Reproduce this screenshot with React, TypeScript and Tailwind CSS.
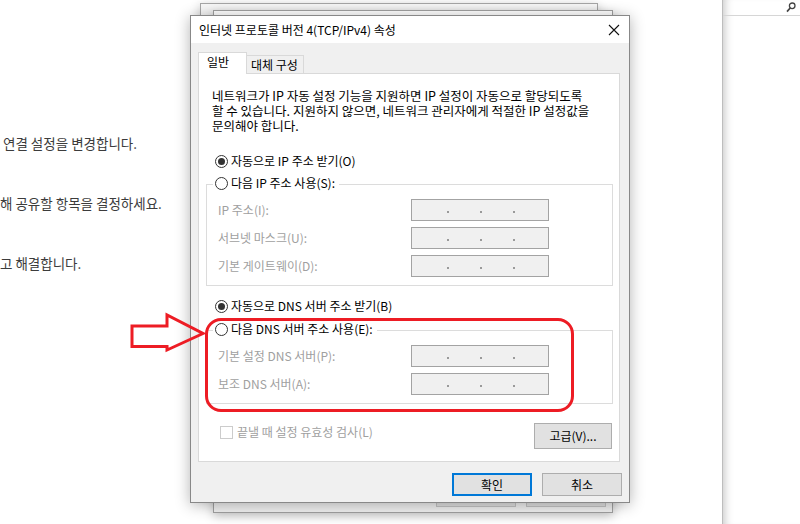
import React from "react";

const FONT = "font-['Noto_Sans_CJK_KR','Noto_Sans',sans-serif]";

interface RadioProps {
  label: string;
  checked?: boolean;
}

const Radio: React.FC<RadioProps> = ({ label, checked = false }) => (
  <div className="flex items-center h-[16px]">
    <span className="w-[13px] h-[13px] rounded-full border border-[#333333] bg-white flex items-center justify-center shrink-0">
      {checked && <span className="w-[7px] h-[7px] rounded-full bg-[#333333]" />}
    </span>
    <span className="ml-[3px] text-[12px] leading-[16px] text-black whitespace-nowrap">{label}</span>
  </div>
);

const IpField: React.FC = () => (
  <div className="w-[138px] h-[22px] border border-[#a3a3a3] bg-[#f0f0f0] flex items-end pb-[7px]">
    <span className="ml-[35px] w-[2px] h-[2px] bg-[#9a9a9a]" />
    <span className="ml-[31px] w-[2px] h-[2px] bg-[#9a9a9a]" />
    <span className="ml-[31px] w-[2px] h-[2px] bg-[#9a9a9a]" />
  </div>
);

interface FieldRowProps {
  label: string;
}

const FieldRow: React.FC<FieldRowProps> = ({ label }) => (
  <div className="flex items-center h-[22px]">
    <span className="w-[193px] text-[12px] text-[#a0a0a0] whitespace-nowrap">{label}</span>
    <IpField />
  </div>
);

interface GroupProps {
  legend: string;
  rows: string[];
  className?: string;
}

const Group: React.FC<GroupProps> = ({ legend, rows, className = "" }) => (
  <div className={`ml-[7px] mr-[6px] border border-[#dcdcdc] pb-[8px] ${className}`}>
    <div className="-mt-[10px] ml-[6px] pl-[2px] pr-[4px] w-fit bg-white">
      <Radio label={legend} />
    </div>
    <div className="mt-[8px] pl-[11px] flex flex-col gap-[6px]">
      {rows.map((r) => (
        <FieldRow key={r} label={r} />
      ))}
    </div>
  </div>
);

const WinButton: React.FC<{ label: string; primary?: boolean }> = ({ label, primary }) => (
  <div
    className={`w-[80px] h-[23px] bg-[#e1e1e1] flex items-center justify-center text-[12px] text-black ${
      primary ? "border-2 border-[#0078d7]" : "border border-[#adadad]"
    }`}
  >
    {label}
  </div>
);

const Dialog: React.FC = () => (
  <div className="absolute left-[190px] top-[15px] w-[440px] h-[488px] border border-[#888888] bg-[#f0f0f0] shadow-[0_2px_14px_rgba(0,0,0,0.3)] flex flex-col">
    <div className="h-[27px] bg-white flex items-center justify-between pl-[8px] pr-[8px] shrink-0">
      <span className="text-[12px] text-black">인터넷 프로토콜 버전 4(TCP/IPv4) 속성</span>
      <svg width="12" height="12" viewBox="0 0 12 12" className="mr-[1px]">
        <path d="M1 1 L11 11 M11 1 L1 11" stroke="#111" strokeWidth="1.1" />
      </svg>
    </div>

    <div className="flex flex-col px-[7px] pt-[9px]">
      <div className="flex items-end h-[21px]">
        <div className="relative z-10 -mb-px w-[49px] h-[22px] bg-white border border-b-0 border-[#d9d9d9] pl-[8px] pt-[1px] text-[12px] leading-[16px]">
          일반
        </div>
        <div className="w-[57px] h-[18px] border border-b-0 border-l-0 border-[#d9d9d9] bg-[#f0f0f0] pl-[4px] flex items-center text-[12px]">
          대체 구성
        </div>
      </div>

      <div className="w-[422px] bg-white border border-[#d9d9d9] flex flex-col pb-[12px]">
        <div className="mt-[14px] ml-[13px] flex flex-col text-[12.5px] leading-[15px] text-black whitespace-nowrap">
          <span>네트워크가 IP 자동 설정 기능을 지원하면 IP 설정이 자동으로 할당되도록</span>
          <span>할 수 있습니다. 지원하지 않으면, 네트워크 관리자에게 적절한 IP 설정값을</span>
          <span>문의해야 합니다.</span>
        </div>

        <div className="mt-[20px] ml-[16px]">
          <Radio checked label="자동으로 IP 주소 받기(O)" />
        </div>
        <Group
          className="mt-[15px]"
          legend="다음 IP 주소 사용(S):"
          rows={["IP 주소(I):", "서브넷 마스크(U):", "기본 게이트웨이(D):"]}
        />

        <div className="mt-[12px] ml-[16px]">
          <Radio checked label="자동으로 DNS 서버 주소 받기(B)" />
        </div>
        <Group
          className="mt-[16px]"
          legend="다음 DNS 서버 주소 사용(E):"
          rows={["기본 설정 DNS 서버(P):", "보조 DNS 서버(A):"]}
        />

        <div className="mt-[19px] flex items-start justify-between pr-[7px]">
          <div className="mt-[1px] ml-[21px] h-[16px] flex items-center">
            <span className="w-[13px] h-[13px] border border-[#cccccc] bg-white" />
            <span className="ml-[4px] text-[12px] text-[#a0a0a0]">끝낼 때 설정 유효성 검사(L)</span>
          </div>
          <div className="w-[78px] h-[26px] bg-[#e1e1e1] border border-[#adadad] flex items-center justify-center text-[12px]">
            고급(V)...
          </div>
        </div>
      </div>

      <div className="mt-[11px] flex justify-end gap-[10px]">
        <WinButton primary label="확인" />
        <WinButton label="취소" />
      </div>
    </div>
  </div>
);

const App: React.FC = () => {
  return (
    <div className={`relative w-[800px] h-[524px] overflow-hidden bg-white ${FONT}`}>
      {/* page behind the dialogs */}
      <div className="flex h-full">
        <div className="w-[722px] pt-[135px] flex flex-col gap-[44px] text-[13.5px] leading-[16px] text-[#3c3c3c]">
          <span className="pl-[3px]">연결 설정을 변경합니다.</span>
          <span>해 공유할 항목을 결정하세요.</span>
          <span>고 해결합니다.</span>
        </div>
        <div className="flex-1 border-l border-[#bdbdbd] shadow-[inset_9px_0_8px_-7px_rgba(0,0,0,0.22)]">
          <div className="h-[16px] border-b border-[#d6d6d6] flex items-center justify-end pr-[4px]">
            <svg width="10" height="11" viewBox="0 0 10 11">
              <circle cx="6.2" cy="3.8" r="2.8" fill="none" stroke="#444" strokeWidth="1.3" />
              <path d="M4.2 6 L1 9.6" stroke="#444" strokeWidth="1.7" />
            </svg>
          </div>
        </div>
      </div>

      {/* stacked windows behind */}
      <div className="absolute left-[200px] top-[3px] w-[398px] h-[490px] bg-[#f7f7f7] border border-[#a6a6a6] shadow-[0_2px_10px_rgba(0,0,0,0.2)]" />
      <div className="absolute left-[213px] top-[10px] w-[400px] h-[503px] bg-[#f0f0f0] border border-[#a0a0a0] shadow-[0_3px_10px_rgba(0,0,0,0.25)] flex flex-col">
        <div className="h-[27px] bg-white" />
        <div className="flex-1" />
        <div className="flex justify-end gap-[10px] pr-[6px] mb-[5px]">
          <div className="w-[80px] h-[23px] bg-[#e1e1e1] border border-[#c4c4c4]" />
          <div className="w-[80px] h-[23px] bg-[#e1e1e1] border border-[#c4c4c4]" />
        </div>
      </div>

      <Dialog />

      {/* red annotations */}
      <div className="absolute left-[205px] top-[318px] w-[369px] h-[94px] border-[3px] border-[#ed1c24] rounded-[16px] pointer-events-none" />
      <svg className="absolute left-[128px] top-[310px]" width="82" height="46" viewBox="0 0 82 46">
        <path
          d="M4 16 H39 V5 L75 23.5 L39 40 V36.5 H4 Z"
          fill="none"
          stroke="#ed1c24"
          strokeWidth="3"
          strokeLinejoin="miter"
        />
      </svg>
    </div>
  );
};

export default App;
